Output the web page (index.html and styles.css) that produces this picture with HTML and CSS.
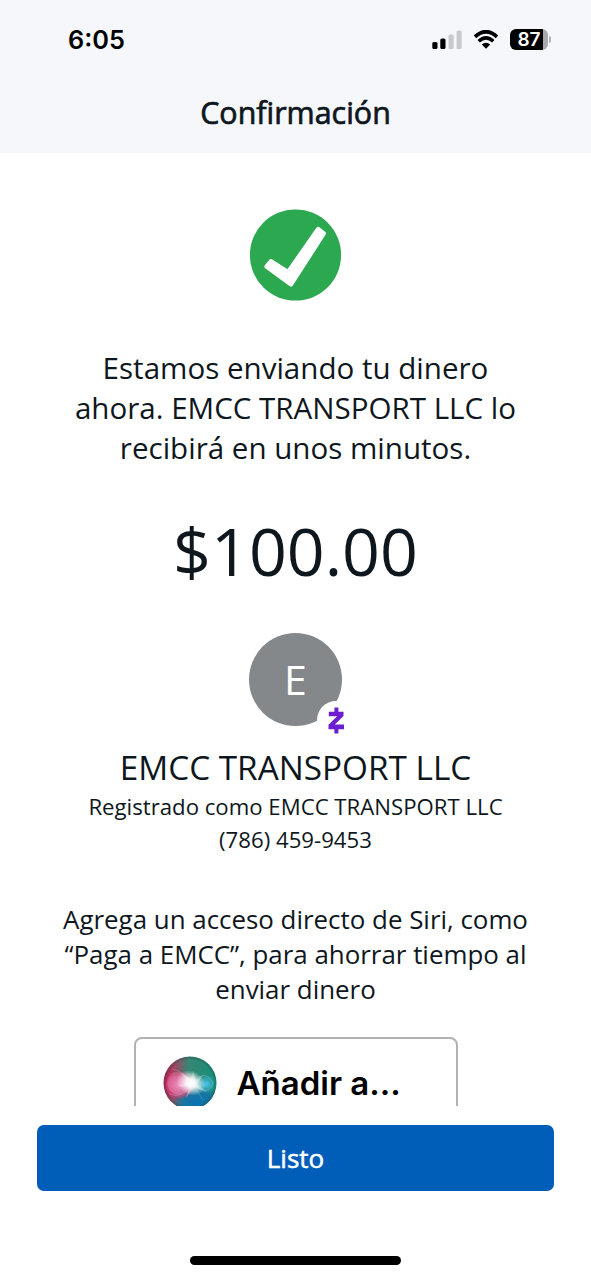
FILE: index.html
```html
<!DOCTYPE html>
<html lang="es">
<head>
<meta charset="utf-8">
<meta name="viewport" content="width=device-width, initial-scale=1">
<title>Confirmación</title>
<link rel="stylesheet" href="styles.css">
</head>
<body>
<div class="screen">
  <header class="header">
    <div class="status-bar">
      <span class="time">6:05</span>
      <div class="status-icons">
        <svg class="signal" width="30" height="20" viewBox="0 0 30 20">
          <rect x="0.300" y="12" width="5.200" height="7" rx="1.600"/>
          <rect x="8.300" y="8.500" width="5.200" height="10.500" rx="1.600"/>
          <rect class="dim" x="16.500" y="4.500" width="5.200" height="14.500" rx="1.600"/>
          <rect class="dim" x="24.500" y="0.500" width="5.200" height="18.500" rx="1.600"/>
        </svg>
        <svg class="wifi" width="26" height="19" viewBox="0 0 26 19">
          <path d="M2 6.800Q13-3.200 24 6.800" fill="none" stroke="#000" stroke-width="3.700"/>
          <path d="M5.700 11.200Q13 4.600 20.300 11.200" fill="none" stroke="#000" stroke-width="3.500"/>
          <path d="M8.800 14.600Q13 11 17.200 14.600L13 18.800Z"/>
        </svg>
        <div class="battery">
          <span class="battery-level">87</span>
          <span class="battery-cap"></span>
        </div>
      </div>
    </div>
    <h1 class="title">Confirmación</h1>
  </header>

  <main class="content">
    <svg class="check" width="93" height="92" viewBox="0 0 93 92">
      <circle cx="46.500" cy="46" r="45.600" fill="#2ca850"/>
      <path d="M18 57.500L22 52.500L39.200 63.500L69.200 20.500L74.400 24.500L41.900 75Z" fill="#fff" stroke="#fff" stroke-width="5" stroke-linejoin="round"/>
    </svg>
    <p class="message">Estamos enviando tu dinero<br>ahora. EMCC TRANSPORT LLC lo<br>recibirá en unos minutos.</p>
    <div class="amount">$100.00</div>
    <div class="avatar">
      <span>E</span>
      <div class="badge">
        <svg width="38" height="38" viewBox="0 0 38 38">
          <path d="M11.800 10.700H26.500V15L17.800 23.600H27V28.300H11.500V23.700L20.100 15.200H11.800Z" fill="#6b1fd0"/>
          <path d="M17.400 6.500h4v5h-4zM17.400 27.500h4v5h-4z" fill="#6b1fd0"/>
        </svg>
      </div>
    </div>
    <h2 class="name">EMCC TRANSPORT LLC</h2>
    <p class="details"><span class="registered">Registrado como EMCC TRANSPORT LLC</span><br>(786) 459-9453</p>
    <p class="siri-hint">Agrega un acceso directo de Siri, como<br>“Paga a EMCC”, para ahorrar tiempo al<br>enviar dinero</p>
    <div class="siri-button">
      <svg class="siri-orb" width="54" height="54" viewBox="0 0 54 54">
        <defs>
          <clipPath id="orb"><circle cx="27" cy="27" r="26.500"/></clipPath>
          <linearGradient id="base" x1="0" y1="0.350" x2="1" y2="0.450">
            <stop offset="0" stop-color="#c01549"/><stop offset="0.200" stop-color="#a04560"/>
            <stop offset="0.450" stop-color="#378673"/><stop offset="1" stop-color="#159078"/>
          </linearGradient>
          <radialGradient id="blue"><stop offset="0" stop-color="#0872b8"/><stop offset="0.600" stop-color="#1170ac" stop-opacity=".8"/><stop offset="1" stop-color="#1170ac" stop-opacity="0"/></radialGradient>
          <radialGradient id="pink"><stop offset="0" stop-color="#ef83bb"/><stop offset="0.650" stop-color="#e0508e" stop-opacity=".8"/><stop offset="1" stop-color="#d62b6b" stop-opacity="0"/></radialGradient>
          <radialGradient id="cyan"><stop offset="0" stop-color="#51c7f0"/><stop offset="1" stop-color="#35b3df" stop-opacity="0"/></radialGradient>
          <radialGradient id="glow"><stop offset="0" stop-color="#fff"/><stop offset="0.350" stop-color="#fff" stop-opacity=".9"/><stop offset="1" stop-color="#fff" stop-opacity="0"/></radialGradient>
        </defs>
        <g clip-path="url(#orb)">
          <rect width="54" height="54" fill="url(#base)"/>
          <ellipse cx="35" cy="49" rx="26" ry="20" fill="url(#blue)"/>
          <ellipse cx="16" cy="29" rx="16" ry="15" fill="url(#pink)"/>
          <ellipse cx="43" cy="28" rx="11" ry="10" fill="url(#cyan)"/>
          <path d="M4 27C6 11 20 13 29 27C20 43 7 42 4 27Z" fill="#fff" opacity=".12"/>
          <path d="M9 13Q22 16 29 27Q20 44 6 38M29 27Q42 12 50 27Q45 42 29 27M29 27L40 44" fill="none" stroke="#d8eeff" stroke-width="1" opacity=".2"/>
          <ellipse cx="28" cy="27" rx="15" ry="12" fill="url(#glow)" transform="rotate(25 28 27)"/>
          <path d="M17 16L28 24L30 15L33 24L40 19L34 28L44 36L31 31L23 42L26 31L15 30L25 26Z" fill="#fff" opacity=".3"/>
          <circle cx="27" cy="27" r="25.300" fill="none" stroke="#264c50" stroke-width="2.400" opacity=".3"/>
        </g>
      </svg>
      <span>Añadir a...</span>
    </div>
  </main>

  <footer class="footer">
    <button class="done">Listo</button>
    <div class="home-indicator"></div>
  </footer>
</div>
</body>
</html>
```
FILE: styles.css
```css
* { box-sizing: border-box; margin: 0; padding: 0; }
body { background: #fff; color: #0e171d; font-family: "Open Sans", "Noto Sans", sans-serif; }
.screen { width: 591px; height: 1280px; display: flex; flex-direction: column; overflow: hidden; }

.header { height: 153px; flex: none; background: #f5f7fb; }
.status-bar { height: 79px; display: flex; justify-content: space-between; align-items: center; padding: 0 40px 0 68px; }
.time { font: 600 25.300px/30px Inter, sans-serif; color: #000; }
.status-icons { display: flex; align-items: center; }
.signal { margin-right: 11px; }
.signal .dim { fill: #c8c9cc; }
.wifi { margin-right: 11px; }
.battery { display: flex; align-items: center; gap: 1px; }
.battery-level { width: 38px; height: 21px; border-radius: 6px; background: linear-gradient(90deg, #000 33px, #a9aaad 33px); color: #fff; font: 600 19px/21px Inter, sans-serif; text-align: center; }
.battery-cap { width: 2px; height: 7px; border-radius: 0 3px 3px 0; background: #b5b6b9; }
.title { font-size: 30.400px; font-weight: 400; -webkit-text-stroke: 0.7px currentColor; line-height: 40px; text-align: center; padding-top: 14px; }

.content { height: 953px; flex: none; overflow: hidden; display: flex; flex-direction: column; align-items: center; padding-top: 56px; text-align: center; white-space: nowrap; }
.check { flex: none; }
.message { font-size: 29.550px; line-height: 40px; margin-top: 47px; }
.amount { font-size: 66.300px; line-height: 90px; margin-top: 37px; }
.avatar { position: relative; flex: none; width: 93px; height: 93px; margin-top: 38px; border-radius: 50%; background: #84888b; color: #fff; font-size: 41px; line-height: 93px; }
.badge { position: absolute; left: 68px; top: 68px; width: 38px; height: 38px; border-radius: 50%; background: #fff; }
.badge svg { display: block; }
.name { font-size: 33.300px; font-weight: 400; line-height: 44px; margin-top: 19px; }
.details { font-size: 22.200px; line-height: 33px; margin-top: 1px; }
.siri-hint { font-size: 25.900px; line-height: 35px; margin-top: 46px; }
.siri-button { flex: none; width: 324px; height: 92px; margin-top: 30px; border: 2px solid #b2b2b2; border-radius: 8px; display: flex; align-items: center; gap: 20px; padding-left: 27px; color: #000; font: 600 33px/40px Inter, sans-serif; }

.footer { flex: 1; display: flex; flex-direction: column; align-items: center; justify-content: space-between; padding: 19px 37px 15px; }
.done { width: 517px; height: 66px; border: 0; border-radius: 7px; background: #005eb9; color: #fff; font: 400 26px/34px "Open Sans", sans-serif; -webkit-text-stroke: 0.5px currentColor; }
.home-indicator { width: 211px; height: 9px; border-radius: 5px; background: #000; }
```
